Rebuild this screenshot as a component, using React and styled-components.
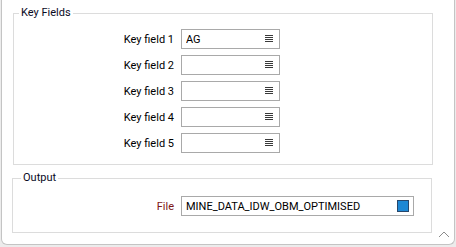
import React from "react";
import styled, { createGlobalStyle } from "styled-components";

const Global = createGlobalStyle`
  html, body { margin: 0; padding: 0; background: #ececec; }
  body { font-family: Roboto, "Noto Sans", "Liberation Sans", sans-serif; font-size: 11px; color: #000; }
  * { box-sizing: border-box; }
`;

const Panel = styled.div`
  position: relative;
  width: 454px;
  height: 245px;
  margin-left: 1px;
  background: #fff;
  border: 1px solid #c4c4c4;
  border-top: none;
  border-radius: 0 0 6px 6px;
  padding-top: 6px;
  display: flex;
  flex-direction: column;
`;

const Group = styled.fieldset`
  margin: ${(p) => p.$top}px 0 0 ${(p) => p.$left}px;
  width: 420px;
  border: 1px solid #dcdcdc;
  padding: ${(p) => p.$pt}px 0 ${(p) => p.$pb}px 0;
  min-width: 0;
`;

const Legend = styled.legend`
  margin-left: ${(p) => p.$offset}px;
  padding: 0 2px;
  font-size: 11px;
  line-height: 14px;
  color: #0a0a1e;
`;

const Rows = styled.div`
  display: flex;
  flex-direction: column;
  gap: 6px;
`;

const Row = styled.div`
  display: grid;
  grid-template-columns: ${(p) => p.$labelWidth}px auto;
  column-gap: 7px;
  align-items: center;
`;

const Label = styled.label`
  text-align: right;
  white-space: nowrap;
  color: ${(p) => (p.$required ? "#7d1515" : "#000")};
`;

const Input = styled.div`
  width: ${(p) => p.$width}px;
  height: 20px;
  border: 1px solid #a9a9a9;
  background: #fff;
  display: flex;
  align-items: center;
  padding: 0 ${(p) => p.$padRight}px 0 4px;
`;

const Value = styled.span`
  flex: 1;
  white-space: nowrap;
  overflow: hidden;
`;

const Swatch = styled.span`
  width: 12px;
  height: 12px;
  background: #1e88d4;
  border: 1px solid #27476b;
`;

const Grip = styled.svg`
  position: absolute;
  right: 4px;
  bottom: 6px;
`;

const ListIcon = () => (
  <svg width="8" height="8" viewBox="0 0 8 8">
    {[0.5, 2.5, 4.5, 6.5].map((y) => (
      <line key={y} x1="0" x2="8" y1={y} y2={y} stroke="#3a3a3a" strokeWidth="1" />
    ))}
  </svg>
);

const keyFields = [
  { label: "Key field 1", value: "AG" },
  { label: "Key field 2", value: "" },
  { label: "Key field 3", value: "" },
  { label: "Key field 4", value: "" },
  { label: "Key field 5", value: "" },
];

export default function App() {
  return (
    <>
      <Global />
      <Panel>
        <Group $top={0} $left={11} $pt={9} $pb={11}>
          <Legend $offset={5}>Key Fields</Legend>
          <Rows>
            {keyFields.map((f) => (
              <Row key={f.label} $labelWidth={160}>
                <Label>{f.label}</Label>
                <Input $width={99} $padRight={6}>
                  <Value>{f.value}</Value>
                  <ListIcon />
                </Input>
              </Row>
            ))}
          </Rows>
        </Group>
        <Group $top={6} $left={10} $pt={11} $pb={16}>
          <Legend $offset={8}>Output</Legend>
          <Row $labelWidth={161}>
            <Label $required>File</Label>
            <Input $width={233} $padRight={4}>
              <Value>MINE_DATA_IDW_OBM_OPTIMISED</Value>
              <Swatch />
            </Input>
          </Row>
        </Group>
        <Grip width="12" height="7" viewBox="0 0 12 7">
          <polyline points="1,6 6,1 11,6" fill="none" stroke="#8c8c8c" strokeWidth="1" />
        </Grip>
      </Panel>
    </>
  );
}
